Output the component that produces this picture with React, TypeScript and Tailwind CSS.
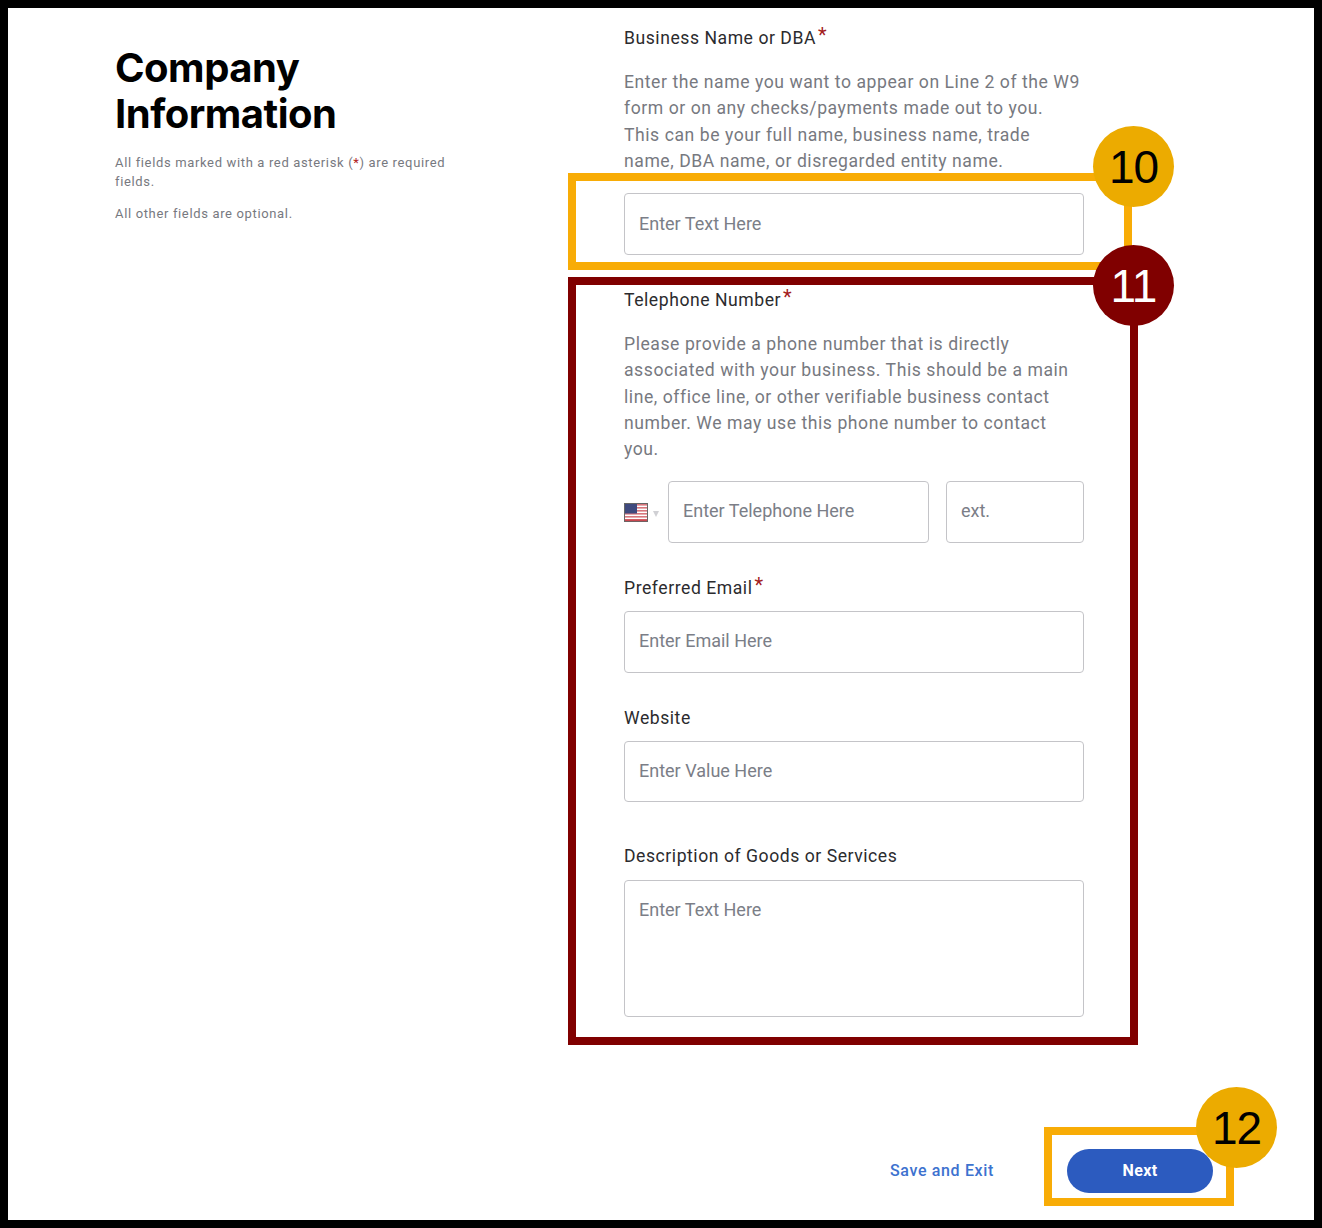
const inputClass =
  "block w-full h-[62px] rounded-[4px] border border-[#c4c4c8] bg-white px-[14px] pb-[2px] text-[18px] tracking-[0px] text-[#333] outline-none placeholder:text-[#7b7e87]";

function Req() {
  return <span className="relative -top-[2px] ml-[2px] text-[20px] leading-none text-[#a32020]">*</span>;
}

function Label({ children }: { children: React.ReactNode }) {
  return <div className="h-[24px] text-[17.6px] leading-[24px] tracking-[0.54px] text-[#2b2b2e]">{children}</div>;
}

function Help({ children }: { children: React.ReactNode }) {
  return <p className="max-w-[456px] text-[17.6px] leading-[26.3px] tracking-[0.55px] text-[#77797f]">{children}</p>;
}

function UsFlag() {
  return (
    <svg width="24" height="19" viewBox="0 0 24 19" className="block">
      <rect x="0.5" y="0.5" width="23" height="18" fill="#fff" stroke="#666" />
      {[1, 4, 7, 10, 13, 16].map((y) => (
        <rect key={y} x="1" y={y} width="22" height="1.6" fill="#d8767c" />
      ))}
      <rect x="1" y="1" width="12" height="9.5" fill="#3f4a7e" />
      <rect x="1" y="16.5" width="22" height="1.6" fill="#c8474f" />
    </svg>
  );
}

function Callout({ n, className, dark }: { n: number; className: string; dark?: boolean }) {
  return (
    <div
      className={`absolute flex h-[81px] w-[81px] items-center justify-center rounded-full text-[46px] leading-none tracking-[-1px] ${
        dark ? "bg-[#800000] text-white" : "bg-[#ecab00] text-black"
      } ${className}`}
      style={{ fontFamily: '"Liberation Sans", sans-serif' }}
    >
      {n}
    </div>
  );
}

export default function App() {
  return (
    <div className="relative h-[1228px] w-[1322px] bg-black p-2" style={{ fontFamily: 'Roboto, sans-serif' }}>
      <div className="flex h-[1212px] w-[1306px] flex-col bg-white">
        <div className="flex flex-1">
          {/* Left intro column */}
          <div className="ml-[107px] w-[340px] shrink-0 pt-[37px]">
            <h1
              className="text-[40px] font-bold leading-[46px] tracking-[-0.5px] text-black"
              style={{ fontFamily: 'Inter, sans-serif' }}
            >
              Company
              <br />
              Information
            </h1>
            <p className="mt-[16px] text-[13px] leading-[19px] tracking-[0.65px] text-[#77797f]">
              All fields marked with a red asterisk (<span className="text-[#b02020]">*</span>) are required fields.
            </p>
            <p className="mt-[13px] text-[13px] leading-[19px] tracking-[0.65px] text-[#77797f]">
              All other fields are optional.
            </p>
          </div>

          {/* Form column */}
          <div className="ml-[169px] w-[460px] shrink-0 pt-[18px]">
            <Label>
              Business Name or DBA
              <Req />
            </Label>
            <div className="mt-[19px] mb-[19px]">
              <Help>
                Enter the name you want to appear on Line 2 of the W9 form or on any checks/payments made out to you.
                This can be your full name, business name, trade name, DBA name, or disregarded entity name.
              </Help>
            </div>
            <input className={inputClass} placeholder="Enter Text Here" />

            <div className="mt-[33px]">
              <Label>
                Telephone Number
                <Req />
              </Label>
            </div>
            <div className="mt-[19px] mb-[18px]">
              <Help>
                Please provide a phone number that is directly associated with your business. This should be a main
                line, office line, or other verifiable business contact number. We may use this phone number to contact
                you.
              </Help>
            </div>
            <div className="flex items-center">
              <div className="flex w-[44px] items-center pt-[2px]">
                <UsFlag />
                <span className="ml-[5px] mt-[2px] h-0 w-0 border-x-[3px] border-t-[6px] border-x-transparent border-t-[#d0d0d4]" />
              </div>
              <input className={`${inputClass} !w-[261px]`} placeholder="Enter Telephone Here" />
              <input className={`${inputClass} ml-[17px] !w-[138px]`} placeholder="ext." />
            </div>

            <div className="mt-[33px]">
              <Label>
                Preferred Email
                <Req />
              </Label>
            </div>
            <input className={`${inputClass} mt-[11px]`} placeholder="Enter Email Here" />

            <div className="mt-[33px]">
              <Label>Website</Label>
            </div>
            <input className={`${inputClass} mt-[11px] !h-[61px]`} placeholder="Enter Value Here" />

            <div className="mt-[42px]">
              <Label>Description of Goods or Services</Label>
            </div>
            <textarea
              className="mt-[12px] block h-[137px] w-full resize-none rounded-[4px] border border-[#c4c4c8] bg-white px-[14px] pt-[17px] text-[18px] leading-[24px] outline-none placeholder:text-[#7b7e87]"
              placeholder="Enter Text Here"
            />
          </div>
        </div>

        {/* Footer actions */}
        <div className="flex items-center justify-end pb-[27px] pr-[101px]">
          <span className="text-[16px] font-medium tracking-[0.65px] text-[#3d72cf]">Save and Exit</span>
          <button className="ml-[73px] flex h-[44px] w-[146px] items-center justify-center rounded-full bg-[#2c5bbf] text-[16px] font-bold tracking-[0.4px] text-white">
            Next
          </button>
        </div>
      </div>

      {/* Annotation overlays */}
      <div className="absolute left-[568px] top-[173px] h-[97px] w-[564px] border-[8px] border-[#f8ac06]" />
      <div className="absolute left-[568px] top-[277px] h-[768px] w-[570px] border-[8px] border-[#800000]" />
      <div className="absolute left-[1044px] top-[1127px] h-[79px] w-[190px] border-[8px] border-[#f8ac06]" />
      <Callout n={10} className="left-[1093px] top-[126px]" />
      <Callout n={11} dark className="left-[1093px] top-[245px]" />
      <Callout n={12} className="left-[1196px] top-[1087px]" />
    </div>
  );
}
